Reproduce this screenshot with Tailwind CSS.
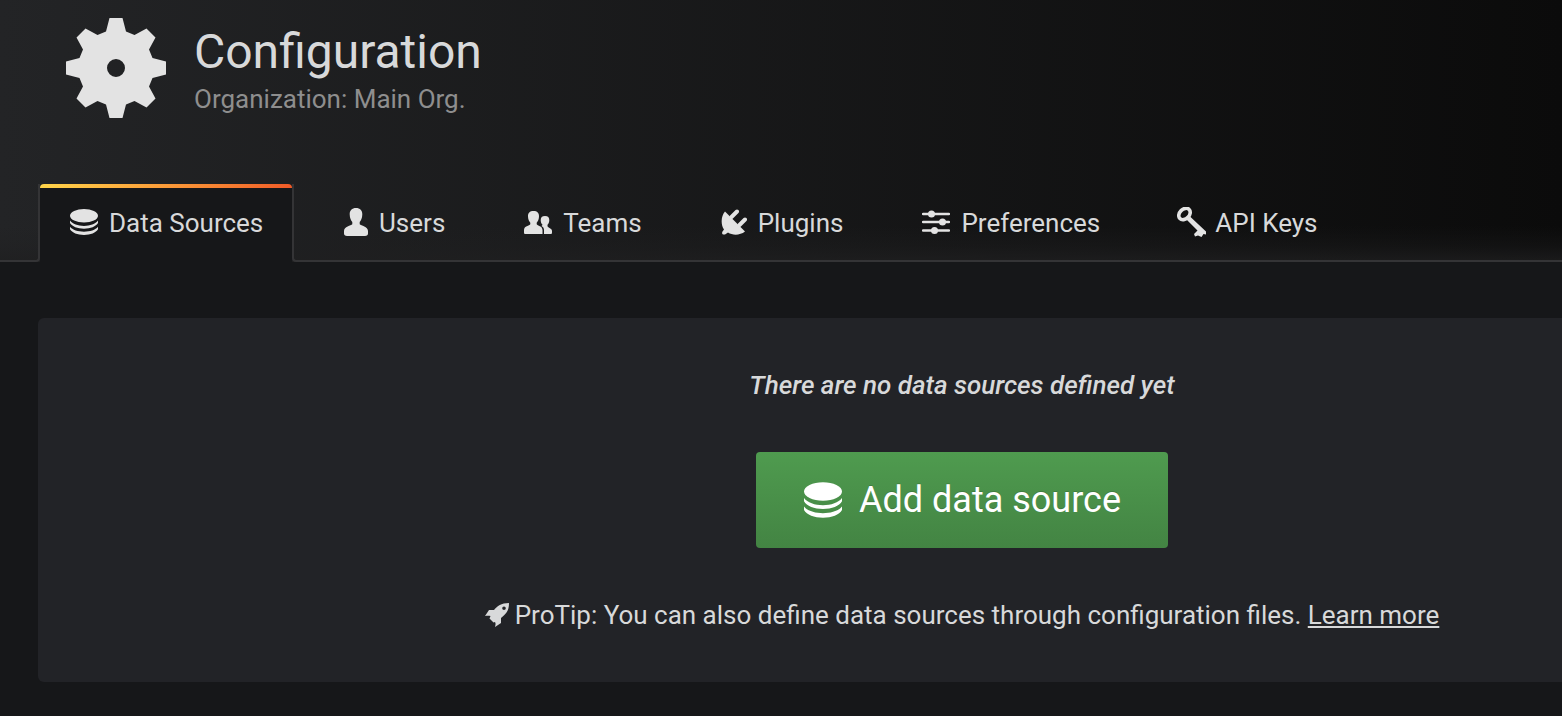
<!DOCTYPE html>
<html lang="en">
<head>
<meta charset="utf-8">
<title>Configuration</title>
<meta name="viewport" content="width=device-width, initial-scale=1">
<script src="https://cdn.jsdelivr.net/npm/@tailwindcss/browser@4"></script>
</head>
<body class="min-h-screen bg-[#161719] font-[Roboto,sans-serif] text-[26px] leading-[40px] text-[#d8d9da]">
<svg class="hidden" aria-hidden="true">
  <symbol id="database" viewBox="0 0 28 26">
    <ellipse cx="14" cy="6.800" rx="14" ry="6.800"/>
    <path d="M0 11.600C2.500 15 8 16.900 14 16.900S25.500 15 28 11.600V14C26 17.500 20.500 19.700 14 19.700S2 17.500 0 14Z"/>
    <path d="M0 17.800C2.500 21 8 22.700 14 22.700S25.500 21 28 17.800V20.300C26 23.800 20.500 26 14 26S2 23.800 0 20.300Z"/>
  </symbol>
</svg>
<header class="bg-[linear-gradient(to_top,#1f1f20cc,#1f1f2055_16px,transparent_36px),linear-gradient(to_right,#232426,#0b0b0b)]">
  <div class="flex items-start gap-7 pt-[18px] pl-[66px]">
    <svg class="size-[100px] shrink-0 fill-[#e3e3e3]" viewBox="0 0 100 100" aria-hidden="true">
      <path fill-rule="evenodd" d="M43.500 0H56.500L60 13.500L68.500 17L80.500 10.500L89.500 19.500L83 31.500L86.500 40L100 43.500V56.500L86.500 60L83 68.500L89.500 80.500L80.500 89.500L68.500 83L60 86.500L56.500 100H43.500L40 86.500L31.500 83L19.500 89.500L10.500 80.500L17 68.500L13.500 60L0 56.500V43.500L13.500 40L17 31.500L10.500 19.500L19.500 10.500L31.500 17L40 13.500ZM50 41A9 9 0 1 0 50 59A9 9 0 1 0 50 41Z"/>
    </svg>
    <div class="pt-1">
      <h1 class="text-[48px] leading-[60px]">Configuration</h1>
      <p class="leading-[34px] text-[#8e8e8e]">Organization: Main Org.</p>
    </div>
  </div>
  <nav class="flex pt-[66px]">
    <div class="w-10 shrink-0 rounded-br-[4px] border-r-2 border-b-2 border-[#343436]"></div>
    <a href="#" class="relative flex h-[78px] w-[252px] shrink-0 items-center gap-[11px] rounded-t-[4px] bg-[#161719] pb-[2px] pl-[30px]">
      <span class="absolute inset-x-0 top-0 h-1 rounded-t-[4px] bg-linear-to-r from-[#ffd54a] to-[#f05a28]"></span>
      <svg class="h-[26px] w-7 fill-[#e3e3e3]" aria-hidden="true"><use href="#database"/></svg><span class="pt-[2px]">Data Sources</span></a>
    <div class="flex grow items-center rounded-bl-[4px] border-b-2 border-l-2 border-[#343436] whitespace-nowrap">
      <a href="#" class="flex items-center gap-[11px] pl-[50px]">
        <svg class="h-7 w-6 fill-[#e3e3e3]" viewBox="0 0 24 28" aria-hidden="true"><path d="M12 0C16 0 18.500 2.500 18.300 6.500C18.200 10 17 12.500 15.700 14V16.200C17 18 24 18 24 23V25.500C24 27 23 28 21 28H3C1 28 0 27 0 25.500V23C0 18 7 18 8.300 16.200V14C7 12.500 5.800 10 5.700 6.500C5.500 2.500 8 0 12 0Z"/></svg><span class="pt-[2px]">Users</span></a>
      <a href="#" class="flex items-center gap-[11px] pl-[79px]">
        <svg class="h-[23px] w-7 fill-[#e3e3e3]" viewBox="0 0 28 23" aria-hidden="true"><path d="M9.500 0C13.200 0 15.200 2 15 5.500C14.900 8.400 13.900 10.400 12.700 11.700V13.300C13.500 15 18.500 15 18.500 19V23H1.500C.5 23 0 22.500 0 21.500V19C0 15 5.500 15 6.300 13.300V11.700C5.100 10.400 4.100 8.400 4 5.500C3.800 2 5.800 0 9.500 0Z"/><path d="M21 5C24 5 25.400 6.600 25.300 9.200C25.200 11.300 24.500 12.800 23.500 13.800V15.200C24 17 28 17 28 20V21.500C28 22.500 27.500 23 26.500 23H20V19C20 17 19 15.700 17.500 14.900C18.200 14.500 18.500 14.200 18.500 13.800C17.500 12.800 16.800 11.300 16.700 9.200C16.600 6.600 18 5 21 5Z"/></svg><span class="pt-[2px]">Teams</span></a>
      <a href="#" class="flex items-center gap-[11px] pl-[79px]">
        <svg class="h-[26px] w-[26px] fill-[#e3e3e3]" viewBox="0 0 26 26" aria-hidden="true"><path d="M4 2.500L24 22.500C19 26.500 11.500 26.500 7 23.500L4 25.500C1.500 26 .5 24.500 1.500 22.500L3 20.500C-.5 15.500 0 7 4 2.500Z"/><path d="M10.500 8L16 2.500M18.500 16L24 10.500" fill="none" stroke="#e3e3e3" stroke-width="4" stroke-linecap="round"/></svg><span class="pt-[2px]">Plugins</span></a>
      <a href="#" class="flex items-center gap-[11px] pl-[79px]">
        <svg class="h-6 w-7 fill-[#e3e3e3]" viewBox="0 0 28 24" aria-hidden="true"><path d="M1 4H27M1 12H27M1 20.500H27" stroke="#e3e3e3" stroke-width="2.400" stroke-linecap="round"/><circle cx="9.500" cy="4" r="3.500"/><circle cx="20.500" cy="12" r="3.500"/><circle cx="12.500" cy="20.500" r="3.500"/></svg><span class="pt-[2px]">Preferences</span></a>
      <a href="#" class="flex items-center gap-2 pl-[77px]">
        <svg class="h-[30px] w-[30px] fill-[#e3e3e3]" viewBox="0 0 30 30" aria-hidden="true"><ellipse cx="7.500" cy="7" rx="6.500" ry="4.800" transform="rotate(-45 7.500 7)" fill="none" stroke="#e3e3e3" stroke-width="3.600"/><path d="M9.500 12.500L13 9.500L29 24.500V27.500L26.500 27L24.500 30L21 28.500L18 29.500L17 27L20.500 23.500Z"/></svg><span class="pt-[2px]">API Keys</span></a>
    </div>
  </nav>
</header>
<main class="mt-14 ml-[38px] flex flex-col items-center gap-[47px] rounded-l-[6px] bg-[#222327] py-[47px] pl-[324px]">
  <p class="font-medium italic">There are no data sources defined yet</p>
  <button type="button" class="flex h-24 items-center gap-[17px] rounded-[4px] bg-linear-to-b from-[#4f9b4f] to-[#438443] pr-[47px] pl-12 text-[36px] text-white [text-shadow:0_-1px_0_rgba(0,0,0,0.15)]">
    <svg class="h-9 w-[38px] fill-white" aria-hidden="true"><use href="#database"/></svg>Add data source</button>
  <p class="flex items-center gap-[6px]">
    <svg class="size-6 fill-[#d8d9da]" viewBox="0 0 24 24" aria-hidden="true"><path fill-rule="evenodd" d="M24 0C16 0 12.500 3 9 7H4L0 13C2 12.500 4 12.500 5.500 13L4.500 15.500L8.500 19.500L10 19C11 20.500 10.500 22 10 24L16 20V15C21 11 24 8 24 0ZM19 3.500A1.800 1.800 0 1 0 19 7.100A1.800 1.800 0 1 0 19 3.500Z"/></svg>
    <span>ProTip: You can also define data sources through configuration files. <a href="#" class="underline">Learn more</a></span></p>
</main>
</body>
</html>
